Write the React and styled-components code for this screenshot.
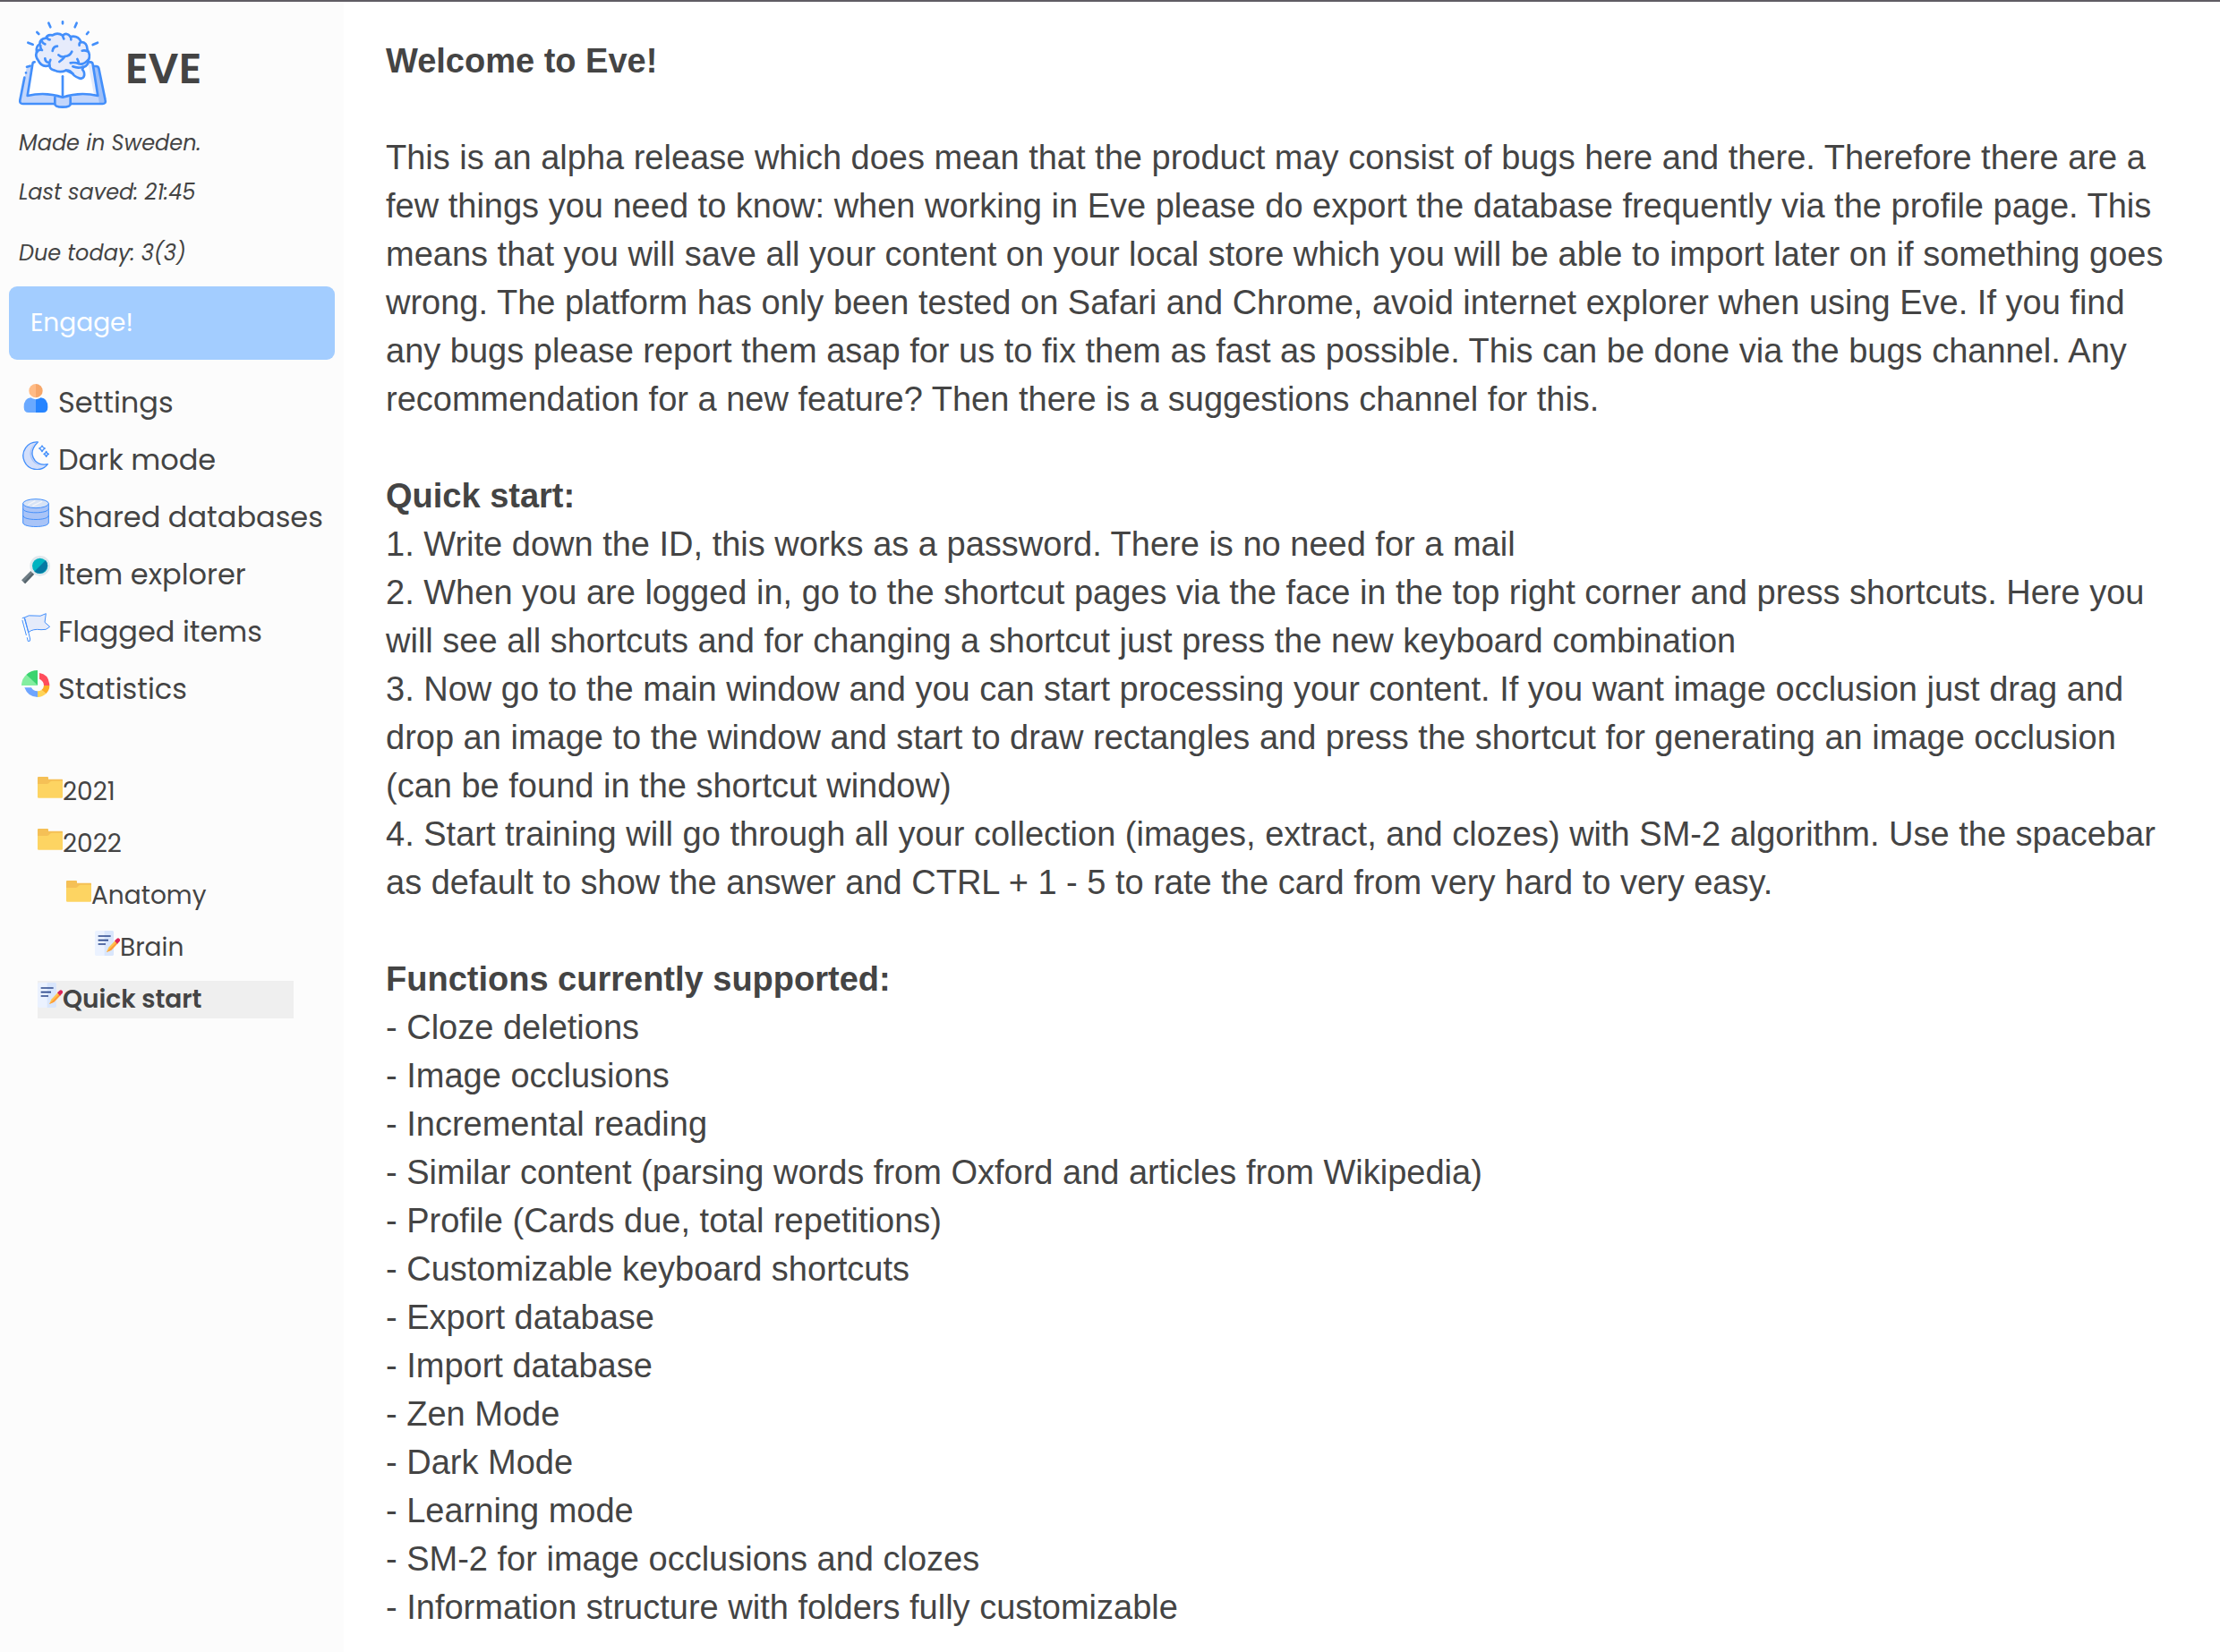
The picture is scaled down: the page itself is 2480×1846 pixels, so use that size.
import React from 'react';
import styled, { createGlobalStyle } from 'styled-components';

const GlobalStyle = createGlobalStyle`
  *, *::before, *::after { box-sizing: border-box; }
  body {
    margin: 0;
    background: #fff;
    color: #444;
    font-family: Poppins, Inter, sans-serif;
  }
  h1, h2, p, ul, ol { margin: 0; padding: 0; }
  ul, ol { list-style: none; }
  button { font: inherit; color: inherit; border: 0; cursor: pointer; }
`;

const Page = styled.div`
  display: flex;
  min-height: 100vh;
  border-top: 2px solid #605d64;
`;

const Sidebar = styled.aside`
  flex: 0 0 384px;
  padding: 20px 10px;
  background: #fcfcfc;
`;

const Brand = styled.header`
  display: flex;
  align-items: center;
  gap: 20px;
  padding: 0 10px;
  margin-bottom: 22px;
`;

const BrandName = styled.h1`
  padding-top: 10px;
  font-size: 48px;
  line-height: 56px;
  font-weight: 600;
`;

const Status = styled.div`
  display: flex;
  flex-direction: column;
  gap: 23px;
  padding: 0 11px;
  margin-bottom: ${(p) => (p.$last ? 21 : 36)}px;
  font-size: 24px;
  line-height: 32px;
  font-style: italic;
`;

const Engage = styled.button`
  display: block;
  width: 100%;
  height: 82px;
  padding: 0 24px;
  border-radius: 9px;
  background: #a3cdff;
  color: #fff;
  font-size: 28px;
  text-align: left;
`;

const Menu = styled.ul`
  padding: 16px 0 0 14px;
`;

const MenuButton = styled.button`
  display: flex;
  align-items: baseline;
  gap: 9px;
  width: 100%;
  height: 64px;
  padding: 0;
  background: none;
  font-size: 32px;
  line-height: 64px;
  text-align: left;
  white-space: nowrap;
  svg { flex: none; }
`;

const Tree = styled.ul`
  display: flex;
  flex-direction: column;
  gap: 16px;
  padding: 62px 46px 0 32px;
`;

const TreeItem = styled.li`
  padding-left: ${(p) => p.$depth * 32}px;
`;

const TreeButton = styled.button`
  display: flex;
  align-items: baseline;
  width: 100%;
  height: 42px;
  padding: 0;
  background: ${(p) => (p.$active ? '#efefef' : 'none')};
  font-size: 28px;
  font-weight: ${(p) => (p.$active ? 600 : 400)};
  line-height: 42px;
  text-align: left;
  svg { flex: none; }
`;

const Content = styled.main`
  flex: 1;
  min-width: 0;
  padding: 39px 47px 22px;
  font-family: "Helvetica Neue", "Liberation Sans", Arial, sans-serif;
  font-size: 38px;
  line-height: 54px;
`;

const Section = styled.section`
  & + & { margin-top: 54px; }
`;

const Heading = styled.h2`
  font-size: 38px;
  line-height: 54px;
  font-weight: 700;
`;

const Logo = () => (
  <svg width="100" height="100" viewBox="30 21 300 300" fill="none" stroke="#438ffb" strokeWidth="8" strokeLinecap="round" strokeLinejoin="round" aria-hidden="true">
    <path d="M78 178 60 178 38 292Q36 303 47 303H153Q158 314 180 314Q202 314 207 303H315Q326 303 323 290L300 180H284L272 165Z" fill="#c3d6fb" stroke="none" />
    <path d="M284 178H298L322 290Q325 303 315 303L303 303Z" fill="#9dbff8" stroke="none" />
    <path d="M86 163 80 165 62 276Q122 262 180 281Q238 262 298 276L279 165 270 163 225 130H130Z" fill="#fff" stroke="none" />
    <path d="M264 163 278 164 298 276 285 272Z" fill="#e3eafb" stroke="none" />
    <path d="M86 163Q80 162 79 170L62 276Q122 262 180 281Q238 262 298 276L281 170Q280 162 271 163" />
    <path d="M52 215 37 291Q35 303 47 303H153M207 303H313Q326 303 323 291L301 184Q299 177 292 177H285M60 179 71 176M57 199V199.5" />
    <path d="M154 282V304Q154 314 180 314Q206 314 206 304V282" />
    <path d="M180 211V280" />
    <path d="M98 157Q87 145 93 130Q89 111 103 103Q104 84 124 83Q128 69 146 73Q163 62 180 74Q194 62 206 78Q232 73 242 96Q262 96 263 122Q275 139 266 158Q266 174 250 180L246 188Q256 199 251 212Q246 222 233 216Q218 211 214 202L191 191Q171 200 153 191Q137 188 136 174Q110 183 98 157Z" fill="#e6ebfb" />
    <path d="M111 94Q113 101 121 103M93 131Q99 119 111 123M106 108Q104 114 108 119M136 174Q134 164 139 156M121 151Q121 161 130 164M146 126Q148 111 162 110M166 139Q176 149 188 144Q204 143 211 128M188 144Q180 155 169 162M180 74Q181 81 184 85M206 78Q209 83 208 88M242 96Q234 99 236 107M263 127Q254 122 245 125M267 154Q249 174 235 169Q220 163 206 166M229 153Q235 162 233 169M248 179Q231 185 214 178M191 191Q203 188 214 202M127 80Q130 88 137 88" />
    <path d="M180 28V34M133 32 139 46M227 32 221 46M94 63 100 69M266 63 261 69M64 98 80 104M297 98 281 105" />
  </svg>
);

const UserIcon = () => (
  <svg width="32" height="32" viewBox="0 0 96 96" aria-hidden="true">
    <path d="M48 0A23 23 0 0 0 48 46Z" fill="#ffbb85" />
    <path d="M48 0A23 23 0 0 1 48 46Z" fill="#f6a76a" />
    <path d="M48 52Q38 50 31 46Q8 48 8 78Q8 96 24 96H48Z" fill="#6aa9ff" />
    <path d="M48 52Q58 50 65 46Q88 48 88 78Q88 96 72 96H48Z" fill="#2684ff" />
  </svg>
);

const MoonIcon = () => (
  <svg width="32" height="32" viewBox="0 0 96 96" fill="none" stroke="#438ffb" strokeWidth="4" strokeLinejoin="round" strokeLinecap="round" aria-hidden="true">
    <path d="M55 3A46 46 0 1 0 88 77Q62 82 46 66Q22 36 55 3Z" fill="#d3dffb" />
    <path d="M46 6Q18 34 34 62Q44 80 66 82Q44 74 36 56Q27 30 46 6Z" fill="#aac5f8" stroke="none" />
    <path d="M69 15 73 21 79 24 73 28 69 35 65 28 59 24 65 21ZM83 34 86 40 91 43 86 46 83 52 80 46 75 43 80 40Z" />
  </svg>
);

const DatabaseIcon = () => (
  <svg width="32" height="32" viewBox="0 0 96 96" stroke="#438ffb" strokeWidth="3" aria-hidden="true">
    <path d="M5 17V81C5 99 91 99 91 81V17Z" fill="#a9c4f7" />
    <ellipse cx="48" cy="17" rx="43" ry="15" fill="#d7e3f6" />
    <path d="M5 34C5 52 91 52 91 34M5 57C5 75 91 75 91 57" fill="none" />
    <path d="M22 21 46 8M37 25 69 10" stroke="#f4f5f8" strokeWidth="4" />
  </svg>
);

const SearchIcon = () => (
  <svg width="32" height="32" viewBox="0 0 96 96" aria-hidden="true">
    <path d="M36 56 5 87" stroke="#6f7d85" strokeWidth="15" />
    <path d="M40 60 10 91" stroke="#56646c" strokeWidth="7" />
    <circle cx="62" cy="34" r="30" fill="#00b3c0" stroke="#dfe7ec" strokeWidth="8" />
    <path d="M81 15A27 27 0 0 1 43 53Z" fill="#0578a3" />
  </svg>
);

const FlagIcon = () => (
  <svg width="32" height="32" viewBox="0 0 96 96" fill="none" stroke="#438ffb" strokeWidth="3" strokeLinejoin="round" strokeLinecap="round" aria-hidden="true">
    <path d="M10 15Q24 5 42 9Q64 14 82 2L78 31 95 46Q83 59 66 56Q38 52 24 64Z" fill="#e5ebfa" />
    <path d="M3 17Q9 11 12 20L29 87Q31 96 22 95L19 83M3 25 16 74" />
  </svg>
);

const StatsIcon = () => (
  <svg width="32" height="32" viewBox="0 0 96 96" aria-hidden="true">
    <path d="M54 51H0A53 51 0 0 1 16 15Z" fill="#84eea0" />
    <path d="M54 51V0Q31 0 16 15Z" fill="#3bd46f" />
    <path d="M60 9Q92 13 94 51H75Q74 35 60 29Z" fill="#ff4d5c" />
    <path d="M94 51Q94 67 82 79L67 66Q75 59 75 51Z" fill="#fbae26" />
    <path d="M82 79Q70 90 54 90V70Q62 70 67 66Z" fill="#ffd457" />
    <path d="M54 90Q22 90 10 58H33Q39 70 54 70Z" fill="#6fa5ff" />
  </svg>
);

const FolderIcon = () => (
  <svg width="28" height="28" viewBox="0 0 84 84" aria-hidden="true">
    <path d="M0 9Q0 6 3 6H33Q36 6 36 9V14H82Q84 14 84 17V57H0Z" fill="#f5c056" />
    <path d="M0 30H32Q37 30 40 25Q43 20 48 20H84V74Q84 77 80 77H4Q0 77 0 74Z" fill="#fdd462" />
  </svg>
);

const NoteIcon = () => (
  <svg width="28" height="28" viewBox="0 0 84 84" aria-hidden="true">
    <rect width="63" height="84" rx="5" fill="#ebf2ff" />
    <path d="M32 0H58Q63 0 63 5V79Q63 84 58 84H32Z" fill="#d9e6fc" />
    <path d="M11 18H53M11 32H45M11 45H36" stroke="#2b478b" strokeWidth="5" />
    <path d="M39 72 46 56 68 33 77 42 55 65Z" fill="#ffc34e" />
    <path d="M39 72 55 65 77 42 73 38Z" fill="#ff9a38" />
    <path d="M66 34 74 26Q79 23 83 28Q86 33 82 37L75 44Z" fill="#dd2456" />
  </svg>
);

const menuItems = [
  { label: 'Settings', Icon: UserIcon },
  { label: 'Dark mode', Icon: MoonIcon },
  { label: 'Shared databases', Icon: DatabaseIcon },
  { label: 'Item explorer', Icon: SearchIcon },
  { label: 'Flagged items', Icon: FlagIcon },
  { label: 'Statistics', Icon: StatsIcon },
];

const treeItems = [
  { label: '2021', Icon: FolderIcon, depth: 0 },
  { label: '2022', Icon: FolderIcon, depth: 0 },
  { label: 'Anatomy', Icon: FolderIcon, depth: 1 },
  { label: 'Brain', Icon: NoteIcon, depth: 2 },
  { label: 'Quick start', Icon: NoteIcon, depth: 0, active: true },
];

const steps = [
  '1. Write down the ID, this works as a password. There is no need for a mail',
  '2. When you are logged in, go to the shortcut pages via the face in the top right corner and press shortcuts. Here you will see all shortcuts and for changing a shortcut just press the new keyboard combination',
  '3. Now go to the main window and you can start processing your content. If you want image occlusion just drag and drop an image to the window and start to draw rectangles and press the shortcut for generating an image occlusion (can be found in the shortcut window)',
  '4. Start training will go through all your collection (images, extract, and clozes) with SM-2 algorithm. Use the spacebar as default to show the answer and CTRL + 1 - 5 to rate the card from very hard to very easy.',
];

const features = [
  'Cloze deletions',
  'Image occlusions',
  'Incremental reading',
  'Similar content (parsing words from Oxford and articles from Wikipedia)',
  'Profile (Cards due, total repetitions)',
  'Customizable keyboard shortcuts',
  'Export database',
  'Import database',
  'Zen Mode',
  'Dark Mode',
  'Learning mode',
  'SM-2 for image occlusions and clozes',
  'Information structure with folders fully customizable',
];

export default function App() {
  return (
    <>
      <GlobalStyle />
      <Page>
        <Sidebar>
          <Brand>
            <Logo />
            <BrandName>EVE</BrandName>
          </Brand>
          <Status>
            <p>Made in Sweden.</p>
            <p>Last saved: 21:45</p>
          </Status>
          <Status $last>
            <p>Due today: 3(3)</p>
          </Status>
          <Engage type="button">Engage!</Engage>
          <nav>
            <Menu>
              {menuItems.map(({ label, Icon }) => (
                <li key={label}>
                  <MenuButton type="button"><Icon />{label}</MenuButton>
                </li>
              ))}
            </Menu>
            <Tree>
              {treeItems.map(({ label, Icon, depth, active }) => (
                <TreeItem key={label} $depth={depth}>
                  <TreeButton type="button" $active={active}><Icon />{label}</TreeButton>
                </TreeItem>
              ))}
            </Tree>
          </nav>
        </Sidebar>
        <Content>
          <Section>
            <Heading>Welcome to Eve!</Heading>
          </Section>
          <Section>
            <p>
              This is an alpha release which does mean that the product may consist of bugs here and there. Therefore
              there are a few things you need to know: when working in Eve please do export the database frequently via
              the profile page. This means that you will save all your content on your local store which you will be
              able to import later on if something goes wrong. The platform has only been tested on Safari and Chrome,
              avoid internet explorer when using Eve. If you find any bugs please report them asap for us to fix them as
              fast as possible. This can be done via the bugs channel. Any recommendation for a new feature? Then there
              is a suggestions channel for this.
            </p>
          </Section>
          <Section>
            <Heading>Quick start:</Heading>
            <ol>{steps.map((s) => <li key={s}>{s}</li>)}</ol>
          </Section>
          <Section>
            <Heading>Functions currently supported:</Heading>
            <ul>{features.map((f) => <li key={f}>- {f}</li>)}</ul>
          </Section>
        </Content>
      </Page>
    </>
  );
}
